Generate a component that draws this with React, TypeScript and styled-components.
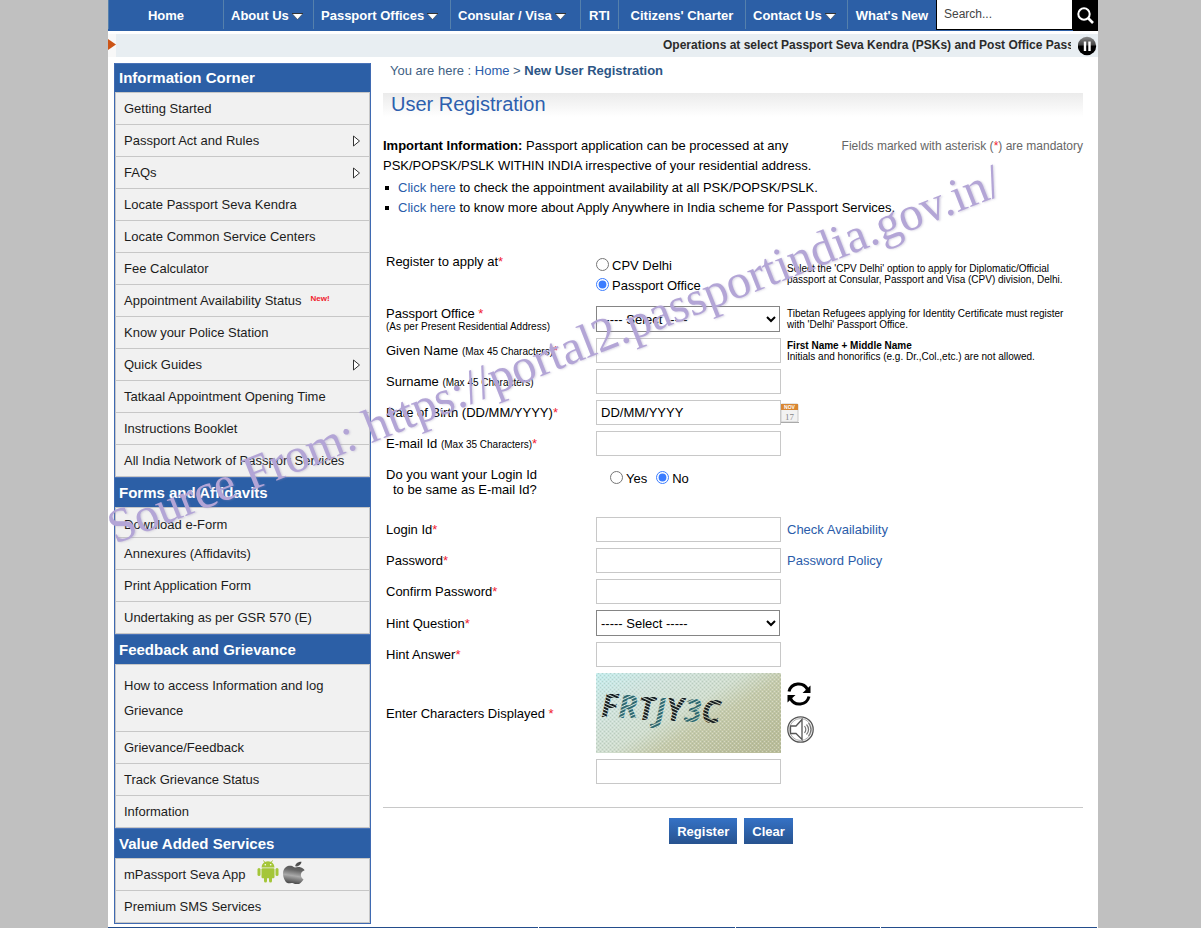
import React from 'react';
import styled, { createGlobalStyle, css } from 'styled-components';

const blue = '#2c5fa6';
const link = '#2a5caa';

const GlobalStyle = createGlobalStyle`
  * { box-sizing: border-box; }
  body {
    margin: 0;
    background: #c0c0c0;
    color: #000;
    font: 13px/15px "Liberation Sans", Arial, sans-serif;
  }
  a { color: ${link}; text-decoration: none; }
  ul { margin: 0; padding: 0; list-style: none; }
  button, input, select { font: inherit; }
`;

const Shell = styled.div`
  padding: 0 103px 0 108px;
`;

const Page = styled.div`
  position: relative;
  min-width: 900px;
  background: #fff;
`;

const TopBar = styled.header`
  display: flex;
  height: 31px;
  background: ${blue};
`;

const Nav = styled.nav`
  flex: 1;
  display: grid;
  grid-template-columns: 115fr 90fr 137fr 130fr 38fr 127fr 102fr 89fr;
`;

const NavLink = styled.a<{ $menu?: boolean }>`
  display: flex;
  align-items: center;
  justify-content: ${p => (p.$menu ? 'flex-start' : 'center')};
  gap: 3px;
  height: 29px;
  padding-top: 2px;
  padding-left: ${p => (p.$menu ? '7px' : '0')};
  border-left: 1px solid #5580ac;
  color: #fff;
  font-weight: bold;
  white-space: nowrap;
  svg { flex: none; margin-top: 2px; }
`;

const SearchForm = styled.form`
  display: flex;
  width: 162px;
`;

const SearchInput = styled.input`
  flex: 1;
  min-width: 0;
  height: 30px;
  padding: 0 7px 2px;
  border: 1px solid #000;
  border-top: 0;
  border-radius: 0;
  font-size: 12px;
  outline: 0;
  &::placeholder { color: #444; }
`;

const SearchButton = styled.button`
  display: grid;
  place-items: center;
  width: 25px;
  padding: 0;
  border: 0;
  background: #000;
`;

const Ticker = styled.div`
  display: flex;
  align-items: center;
  height: 23px;
  margin-top: 3px;
  background: #e8eef2;
`;

const TickerMark = styled.span`
  display: flex;
  align-items: center;
  width: 8px;
  height: 23px;
  padding-bottom: 2px;
  background: #f8f8f8;
`;

const TickerText = styled.div`
  flex: 1;
  min-width: 0;
  margin-right: 7px;
  padding-left: 547px;
  overflow: hidden;
  white-space: nowrap;
  color: #2b2b2b;
  font-size: 12px;
  font-weight: bold;
`;

const IconButton = styled.button`
  display: block;
  padding: 0;
  border: 0;
  background: transparent;
  svg { display: block; }
`;

const Columns = styled.div`
  display: flex;
  align-items: flex-start;
  padding: 6px 15px 3px 6px;
`;

const Sidebar = styled.aside`
  flex: none;
  width: 257px;
  border: 1px solid #3f6ab2;
  border-top: 0;
`;

const SideTitle = styled.h2`
  height: 30px;
  margin: 0;
  padding-left: 4px;
  border-top: 1px solid #4a73b8;
  background: ${blue};
  color: #fff;
  font-size: 15px;
  line-height: 30px;
  section:first-child > & {
    height: 29px;
    line-height: 28px;
  }
`;

const SideList = styled.ul`
  border: 1px solid #c7c7c7;
  border-bottom: 0;
  background: #f1f1f1;
`;

const SideItem = styled.li<{ $short?: boolean; $tall?: boolean }>`
  border-bottom: 1px solid #c7c7c7;
  a {
    display: flex;
    align-items: center;
    min-height: ${p => (p.$short ? '29px' : '31px')};
    padding: 0 8px;
    color: #1c1c1c;
    ${p => p.$tall && css`
      padding: 8px 40px 8px 8px;
      line-height: 25px;
    `}
    ${p => p.$short && css`padding-top: 3px;`}
  }
`;

const Arrow = styled.svg`
  margin-left: auto;
`;

const NewTag = styled.sup`
  align-self: flex-start;
  margin: 8px 0 0 9px;
  color: #f0202c;
  font-size: 8px;
  font-weight: bold;
  line-height: 12px;
`;

const AppIcons = styled.span`
  display: flex;
  gap: 4px;
  margin: -6px 0 0 12px;
`;

const Main = styled.main`
  flex: 1;
  min-width: 0;
  margin-left: 12px;
`;

const Crumbs = styled.nav`
  padding-left: 7px;
  color: #3f6184;
  strong { color: #2c5585; }
`;

const PageTitle = styled.h1`
  height: 24px;
  margin: 15px 0 0;
  padding-left: 8px;
  background: linear-gradient(#ebebeb, #fff);
  color: #2d5fae;
  font-size: 20px;
  font-weight: normal;
  line-height: 22px;
`;

const Intro = styled.div`
  display: flex;
  justify-content: space-between;
  align-items: flex-start;
  margin-top: 19px;
  line-height: 20px;
`;

const IntroText = styled.p`
  width: 440px;
  margin: 0;
`;

const Mandatory = styled.span`
  color: #666;
  font-size: 12px;
`;

const Bullets = styled.ul`
  margin-top: 2px;
  line-height: 20px;
  li {
    display: flex;
    align-items: center;
    gap: 9px;
    padding-left: 2px;
  }
  li::before {
    content: "";
    width: 4px;
    height: 4px;
    background: #000;
  }
`;

const RegisterForm = styled.form`
  margin-top: 36px;
`;

const Fields = styled.div`
  display: grid;
  gap: 6px;
  padding-left: 3px;
`;

const Row = styled.div<{ $top?: boolean }>`
  display: grid;
  grid-template-columns: 204px 185px minmax(0, 1fr);
  column-gap: 6px;
  align-items: ${p => (p.$top ? 'start' : 'center')};
`;

const RegisterRow = styled(Row)`
  margin-bottom: 6px;
  p { padding-top: 9px; }
`;

const LoginChoiceRow = styled(Row)`
  padding: 5px 0 14px;
`;

const Label = styled.label`
  white-space: nowrap;
`;

const Small = styled.small`
  font-size: 10px;
  line-height: 11px;
`;

const BlockSmall = styled(Small)`
  display: block;
`;

const Star = styled.span`
  color: #f02030;
`;

const Indented = styled.span`
  display: block;
  padding-left: 7px;
`;

const TextInput = styled.input`
  width: 100%;
  height: 25px;
  padding: 0 4px;
  border: 1px solid #c8c8c8;
  border-radius: 0;
  background: #fff;
  color: #000;
  outline: 0;
  &::placeholder { color: #000; }
`;

const Select = styled.select`
  width: 184px;
  height: 26px;
  border: 1px solid #858585;
  border-radius: 0;
  background: #fff;
  color: #000;
`;

const Radios = styled.div<{ $inline?: boolean }>`
  display: flex;
  flex-direction: ${p => (p.$inline ? 'row' : 'column')};
  gap: ${p => (p.$inline ? '9px' : '0')};
  padding-left: ${p => (p.$inline ? '14px' : '0')};
`;

const RadioLabel = styled.label`
  display: flex;
  align-items: center;
  gap: 3px;
  height: 20px;
  input {
    width: 13px;
    height: 13px;
    margin: 0;
    accent-color: #3b7cff;
  }
  span { padding-top: 3px; }
`;

const Note = styled.p`
  margin: 0;
  font-size: 10px;
  line-height: 11px;
  white-space: pre-line;
`;

const DateSide = styled.div`
  margin-left: -6px;
`;

const CaptchaTools = styled.div`
  display: grid;
  gap: 10px;
  padding-bottom: 2px;
`;

const Captcha = styled.svg`
  display: block;
`;

const Rule = styled.hr`
  height: 1px;
  margin: 23px 0 10px;
  border: 0;
  background: #c8c8c8;
`;

const Actions = styled.div`
  display: flex;
  justify-content: center;
  gap: 7px;
  padding-right: 4px;
`;

const ActionButton = styled.button`
  height: 26px;
  padding: 0 8px;
  border: 0;
  background: linear-gradient(#3572c6, #28538f);
  color: #fff;
  font-weight: bold;
`;

const Footer = styled.footer`
  display: grid;
  grid-template-columns: 430fr 196fr 144fr 216fr;
  gap: 1px;
  padding-right: 1px;
  span { height: 1px; background: #234d8c; }
`;

const Watermark = styled.div`
  position: absolute;
  left: 7px;
  top: 503px;
  color: #b3a5d6;
  font: 48px/50px "Liberation Serif", "Times New Roman", serif;
  text-shadow: 1px 1px 2px rgba(150, 140, 180, 0.35);
  transform: rotate(-21.5deg);
  transform-origin: 0 40px;
  white-space: nowrap;
  pointer-events: none;
`;

const Caret = () => (
  <svg width="11" height="7" viewBox="0 0 11 7" aria-hidden="true">
    <path d="M0 .5h11L5.500 6.500z" fill="#fff" />
    <path d="M0 .5h11" stroke="#333" />
    <path d="M.5 1L5.500 6.500L10.500 1" fill="none" stroke="#333" strokeWidth=".5" />
  </svg>
);

const SideArrow = () => (
  <Arrow width="9" height="12" viewBox="0 0 9 12" aria-hidden="true">
    <path d="M1.500 1v10L7.500 6z" fill="#fff" stroke="#333" />
  </Arrow>
);

const Android = () => (
  <svg width="22" height="23" viewBox="0 0 22 23" fill="#a4c639" aria-hidden="true">
    <path d="M4.500 7.500a6.500 6.300 0 0 1 13 0z" />
    <path d="M6.500 .5l2 3M15.500 .5l-2 3" stroke="#a4c639" strokeWidth="1" />
    <rect x="4.500" y="8.300" width="13" height="10" rx="1.200" />
    <rect x="0.500" y="8" width="3" height="8" rx="1.500" />
    <rect x="18.500" y="8" width="3" height="8" rx="1.500" />
    <rect x="7" y="15" width="3" height="7.500" rx="1.500" />
    <rect x="12" y="15" width="3" height="7.500" rx="1.500" />
    <circle cx="8.300" cy="4.800" r=".8" fill="#fff" />
    <circle cx="13.700" cy="4.800" r=".8" fill="#fff" />
  </svg>
);

const Apple = () => (
  <svg width="24" height="24" viewBox="0 20 420 460" preserveAspectRatio="none" aria-hidden="true">
    <defs>
      <linearGradient id="steel" x1="0" y1="0" x2="0" y2="1">
        <stop offset="0" stopColor="#444" />
        <stop offset=".4" stopColor="#666" />
        <stop offset=".65" stopColor="#aaa" />
        <stop offset="1" stopColor="#444" />
      </linearGradient>
    </defs>
    <path
      transform="rotate(10 192 256)"
      fill="url(#steel)"
      d="M318.7 268.7c-.2-36.7 16.4-64.4 50-84.8-18.8-26.9-47.2-41.7-84.7-44.6-35.5-2.8-74.3 20.7-88.5 20.7-15 0-49.4-19.7-76.4-19.7C63.3 141.2 4 184.8 4 273.5q0 39.3 14.4 81.2c12.8 36.7 59 126.7 107.2 125.2 25.2-.6 43-17.9 75.8-17.9 31.8 0 48.3 17.9 76.4 17.9 48.6-.7 90.4-82.5 102.6-119.3-65.2-30.7-61.7-90-61.7-91.9zm-56.6-164.2c27.3-32.4 24.8-61.9 24-72.5-24.1 1.4-52 16.4-67.900 34.900-17.500 19.800-27.800 44.300-25.600 71.900 26.100 2 49.900-11.400 69.500-34.300z"
    />
  </svg>
);

const Calendar = () => (
  <svg width="18" height="20" viewBox="0 0 18 20" aria-hidden="true">
    <rect x="0" y="1" width="17" height="18" rx="1" fill="#f2f2f2" stroke="#c9c9c9" />
    <rect x="0" y="1" width="17" height="6" fill="#d98732" />
    <text x="8.500" y="6" fontSize="5" fontWeight="bold" textAnchor="middle" fill="#fff">NOV</text>
    <text x="8.500" y="17" fontSize="9" fontFamily="Liberation Serif, serif" textAnchor="middle" fill="#888">17</text>
    <path d="M0 19.500h18" stroke="#aaa" />
  </svg>
);

const Refresh = () => (
  <svg width="24" height="24" viewBox="0 0 24 24" aria-hidden="true">
    <g fill="none" stroke="#000" strokeWidth="3">
      <path d="M2 9.500A9.900 9.900 0 0 1 20.500 7.500" />
      <path d="M22 14.500A9.900 9.900 0 0 1 3.500 16.500" />
    </g>
    <path d="M23.500 3.500v7.500h-8zM.5 20.500v-7.500h8z" />
  </svg>
);

const Speaker = () => (
  <svg width="27" height="27" viewBox="0 0 27 27" fill="none" aria-hidden="true">
    <circle cx="13.500" cy="13.500" r="12.700" stroke="#555" strokeWidth="1.300" />
    <circle cx="13.500" cy="13.500" r="11" stroke="#999" strokeWidth=".8" />
    <path d="M3.500 10h5.500l6-6.500v20L9 17.500H3.500z" fill="#fff" stroke="#555" strokeWidth="1.300" />
    <path d="M17.500 10c1.500 2 1.500 5 0 7M19.500 8.500c2.500 3 2.500 7 0 10M21.500 7c3 4 3 9 0 13" stroke="#777" strokeWidth="1.200" />
  </svg>
);

const CaptchaImage = () => (
  <Captcha width="185" height="80" viewBox="0 0 185 80" role="img" aria-label="Verification characters">
    <defs>
      <linearGradient id="paper" x1="0" y1="0" x2="1" y2=".75">
        <stop offset="0" stopColor="#c4ecec" />
        <stop offset=".25" stopColor="#cfe2dc" />
        <stop offset=".52" stopColor="#d0ddce" />
        <stop offset=".68" stopColor="#c5caab" />
        <stop offset="1" stopColor="#babd9a" />
      </linearGradient>
      <pattern id="dots" width="4" height="4" patternUnits="userSpaceOnUse">
        <path d="M0 0h1v1H0zM2 2h1v1H2z" fill="#fff" opacity=".35" />
        <path d="M2 0h1v1H2zM0 2h1v1H0z" fill="#7d9484" opacity=".25" />
      </pattern>
      <pattern id="hatch" width="3" height="3" patternUnits="userSpaceOnUse" patternTransform="rotate(25)">
        <path d="M0 0h3v2H0z" fill="#171d20" />
      </pattern>
      <pattern id="tealHatch" width="3" height="3" patternUnits="userSpaceOnUse" patternTransform="rotate(-25)">
        <path d="M0 0h3v2H0z" fill="#2d6870" />
      </pattern>
    </defs>
    <rect width="185" height="80" fill="url(#paper)" />
    <rect width="185" height="80" fill="url(#dots)" />
    <text
      x="5"
      y="44"
      fontFamily="Noto Sans, sans-serif"
      fontSize="32"
      fontWeight="bold"
      fontStyle="italic"
      fill="url(#hatch)"
    >
      F<tspan dy="1" fill="url(#tealHatch)">R</tspan>
      <tspan dy="2">T</tspan><tspan dy="1" fill="url(#tealHatch)">J</tspan>
      <tspan>Y</tspan><tspan dy="1" fill="url(#tealHatch)">3</tspan><tspan dy="1">C</tspan>
    </text>
  </Captcha>
);

const navItems = [
  { text: 'Home' },
  { text: 'About Us', menu: true },
  { text: 'Passport Offices', menu: true },
  { text: 'Consular / Visa', menu: true },
  { text: 'RTI' },
  { text: "Citizens' Charter" },
  { text: 'Contact Us', menu: true },
  { text: "What's New" },
];

type Entry = { text: string; arrow?: boolean; isNew?: boolean; apps?: boolean; short?: boolean; tall?: boolean };

const sections: { title: string; items: Entry[] }[] = [
  {
    title: 'Information Corner',
    items: [
      { text: 'Getting Started' },
      { text: 'Passport Act and Rules', arrow: true },
      { text: 'FAQs', arrow: true },
      { text: 'Locate Passport Seva Kendra' },
      { text: 'Locate Common Service Centers' },
      { text: 'Fee Calculator' },
      { text: 'Appointment Availability Status', isNew: true },
      { text: 'Know your Police Station' },
      { text: 'Quick Guides', arrow: true },
      { text: 'Tatkaal Appointment Opening Time' },
      { text: 'Instructions Booklet' },
      { text: 'All India Network of Passport Services' },
    ],
  },
  {
    title: 'Forms and Affidavits',
    items: [
      { text: 'Download e-Form', short: true },
      { text: 'Annexures (Affidavits)' },
      { text: 'Print Application Form' },
      { text: 'Undertaking as per GSR 570 (E)' },
    ],
  },
  {
    title: 'Feedback and Grievance',
    items: [
      { text: 'How to access Information and log Grievance', tall: true },
      { text: 'Grievance/Feedback' },
      { text: 'Track Grievance Status' },
      { text: 'Information' },
    ],
  },
  {
    title: 'Value Added Services',
    items: [{ text: 'mPassport Seva App', apps: true }, { text: 'Premium SMS Services' }],
  },
];

export default function App() {
  return (
    <Shell>
      <GlobalStyle />
      <Page>
        <TopBar>
          <Nav>
            {navItems.map(item => (
              <NavLink key={item.text} href="#" $menu={item.menu}>
                {item.text}
                {item.menu && <Caret />}
              </NavLink>
            ))}
          </Nav>
          <SearchForm>
            <SearchInput type="text" placeholder="Search..." aria-label="Search" />
            <SearchButton type="button" aria-label="Search">
              <svg width="17" height="17" viewBox="0 0 17 17" fill="none" stroke="#fff">
                <circle cx="7" cy="7" r="5.700" strokeWidth="2" />
                <path d="M11 11l5 5" strokeWidth="2.600" />
              </svg>
            </SearchButton>
          </SearchForm>
        </TopBar>
        <Ticker>
          <TickerMark>
            <svg width="8" height="11" viewBox="0 0 8 11" aria-hidden="true">
              <path d="M0 0l8 5.500L0 11z" fill="#cc5416" />
            </svg>
          </TickerMark>
          <TickerText>Operations at select Passport Seva Kendra (PSKs) and Post Office Passport</TickerText>
          <IconButton type="button" aria-label="Pause">
            <svg width="20" height="20" viewBox="0 0 20 20">
              <defs>
                <linearGradient id="knob" x1="0" y1="0" x2="0" y2="1">
                  <stop offset="0" stopColor="#888" />
                  <stop offset=".45" stopColor="#444" />
                  <stop offset=".5" stopColor="#000" />
                </linearGradient>
              </defs>
              <circle cx="9" cy="10" r="9.200" fill="url(#knob)" />
              <path d="M7 5.500v9.500M11.500 5.500v9.500" stroke="#fff" strokeWidth="2.400" />
            </svg>
          </IconButton>
        </Ticker>
        <Columns>
          <Sidebar>
            {sections.map(section => (
              <section key={section.title}>
                <SideTitle>{section.title}</SideTitle>
                <SideList>
                  {section.items.map(item => (
                    <SideItem key={item.text} $short={item.short} $tall={item.tall}>
                      <a href="#">
                        {item.text}
                        {item.arrow && <SideArrow />}
                        {item.isNew && <NewTag>New!</NewTag>}
                        {item.apps && (
                          <AppIcons>
                            <Android />
                            <Apple />
                          </AppIcons>
                        )}
                      </a>
                    </SideItem>
                  ))}
                </SideList>
              </section>
            ))}
          </Sidebar>
          <Main>
            <Crumbs>
              You are here : <a href="#">Home</a> &gt; <strong>New User Registration</strong>
            </Crumbs>
            <PageTitle>User Registration</PageTitle>
            <Intro>
              <IntroText>
                <strong>Important Information:</strong> Passport application can be processed at any
                PSK/POPSK/PSLK WITHIN INDIA irrespective of your residential address.
              </IntroText>
              <Mandatory>
                Fields marked with asterisk (<Star>*</Star>) are mandatory
              </Mandatory>
            </Intro>
            <Bullets>
              <li>
                <span><a href="#">Click here</a> to check the appointment availability at all PSK/POPSK/PSLK.</span>
              </li>
              <li>
                <span><a href="#">Click here</a> to know more about Apply Anywhere in India scheme for Passport Services.</span>
              </li>
            </Bullets>
            <RegisterForm>
              <Fields>
                <RegisterRow $top role="radiogroup" aria-labelledby="apply-at">
                  <Label as="span" id="apply-at">
                    Register to apply at<Star>*</Star>
                  </Label>
                  <Radios>
                    <RadioLabel>
                      <input type="radio" name="office" />
                      <span>CPV Delhi</span>
                    </RadioLabel>
                    <RadioLabel>
                      <input type="radio" name="office" defaultChecked />
                      <span>Passport Office</span>
                    </RadioLabel>
                  </Radios>
                  <Note>{"Select the 'CPV Delhi' option to apply for Diplomatic/Official\npassport at Consular, Passport and Visa (CPV) division, Delhi."}</Note>
                </RegisterRow>
                <Row>
                  <Label htmlFor="passport-office">
                    Passport Office <Star>*</Star>
                    <BlockSmall>(As per Present Residential Address)</BlockSmall>
                  </Label>
                  <Select id="passport-office">
                    <option>----- Select -----</option>
                  </Select>
                  <Note>{"Tibetan Refugees applying for Identity Certificate must register\nwith 'Delhi' Passport Office."}</Note>
                </Row>
                <Row>
                  <Label htmlFor="given">
                    Given Name <Small>(Max 45 Characters)</Small><Star>*</Star>
                  </Label>
                  <TextInput id="given" type="text" />
                  <Note>
                    <strong>First Name + Middle Name</strong>
                    {'\nInitials and honorifics (e.g. Dr.,Col.,etc.) are not allowed.'}
                  </Note>
                </Row>
                <Row>
                  <Label htmlFor="surname">
                    Surname <Small>(Max 45 Characters)</Small>
                  </Label>
                  <TextInput id="surname" type="text" />
                </Row>
                <Row>
                  <Label htmlFor="dob">
                    Date of Birth (DD/MM/YYYY)<Star>*</Star>
                  </Label>
                  <TextInput id="dob" type="text" placeholder="DD/MM/YYYY" />
                  <DateSide>
                    <IconButton type="button" aria-label="Choose date"><Calendar /></IconButton>
                  </DateSide>
                </Row>
                <Row>
                  <Label htmlFor="email">
                    E-mail Id <Small>(Max 35 Characters)</Small><Star>*</Star>
                  </Label>
                  <TextInput id="email" type="text" />
                </Row>
                <LoginChoiceRow $top role="radiogroup" aria-labelledby="same-login">
                  <Label as="span" id="same-login">
                    Do you want your Login Id
                    <Indented>to be same as E-mail Id?</Indented>
                  </Label>
                  <Radios $inline>
                    <RadioLabel>
                      <input type="radio" name="same" />
                      <span>Yes</span>
                    </RadioLabel>
                    <RadioLabel>
                      <input type="radio" name="same" defaultChecked />
                      <span>No</span>
                    </RadioLabel>
                  </Radios>
                </LoginChoiceRow>
                <Row>
                  <Label htmlFor="login">Login Id<Star>*</Star></Label>
                  <TextInput id="login" type="text" />
                  <a href="#">Check Availability</a>
                </Row>
                <Row>
                  <Label htmlFor="password">Password<Star>*</Star></Label>
                  <TextInput id="password" type="password" />
                  <a href="#">Password Policy</a>
                </Row>
                <Row>
                  <Label htmlFor="confirm">Confirm Password<Star>*</Star></Label>
                  <TextInput id="confirm" type="password" />
                </Row>
                <Row>
                  <Label htmlFor="question">Hint Question<Star>*</Star></Label>
                  <Select id="question">
                    <option>----- Select -----</option>
                  </Select>
                </Row>
                <Row>
                  <Label htmlFor="answer">Hint Answer<Star>*</Star></Label>
                  <TextInput id="answer" type="text" />
                </Row>
                <Row>
                  <Label htmlFor="characters">Enter Characters Displayed <Star>*</Star></Label>
                  <CaptchaImage />
                  <CaptchaTools>
                    <IconButton type="button" aria-label="New characters"><Refresh /></IconButton>
                    <IconButton type="button" aria-label="Listen"><Speaker /></IconButton>
                  </CaptchaTools>
                </Row>
                <Row>
                  <span />
                  <TextInput id="characters" type="text" />
                </Row>
              </Fields>
              <Rule />
              <Actions>
                <ActionButton type="button">Register</ActionButton>
                <ActionButton type="reset">Clear</ActionButton>
              </Actions>
            </RegisterForm>
          </Main>
        </Columns>
        <Footer>
          <span />
          <span />
          <span />
          <span />
        </Footer>
        <Watermark>Source From: https://portal2.passportindia.gov.in/</Watermark>
      </Page>
    </Shell>
  );
}
